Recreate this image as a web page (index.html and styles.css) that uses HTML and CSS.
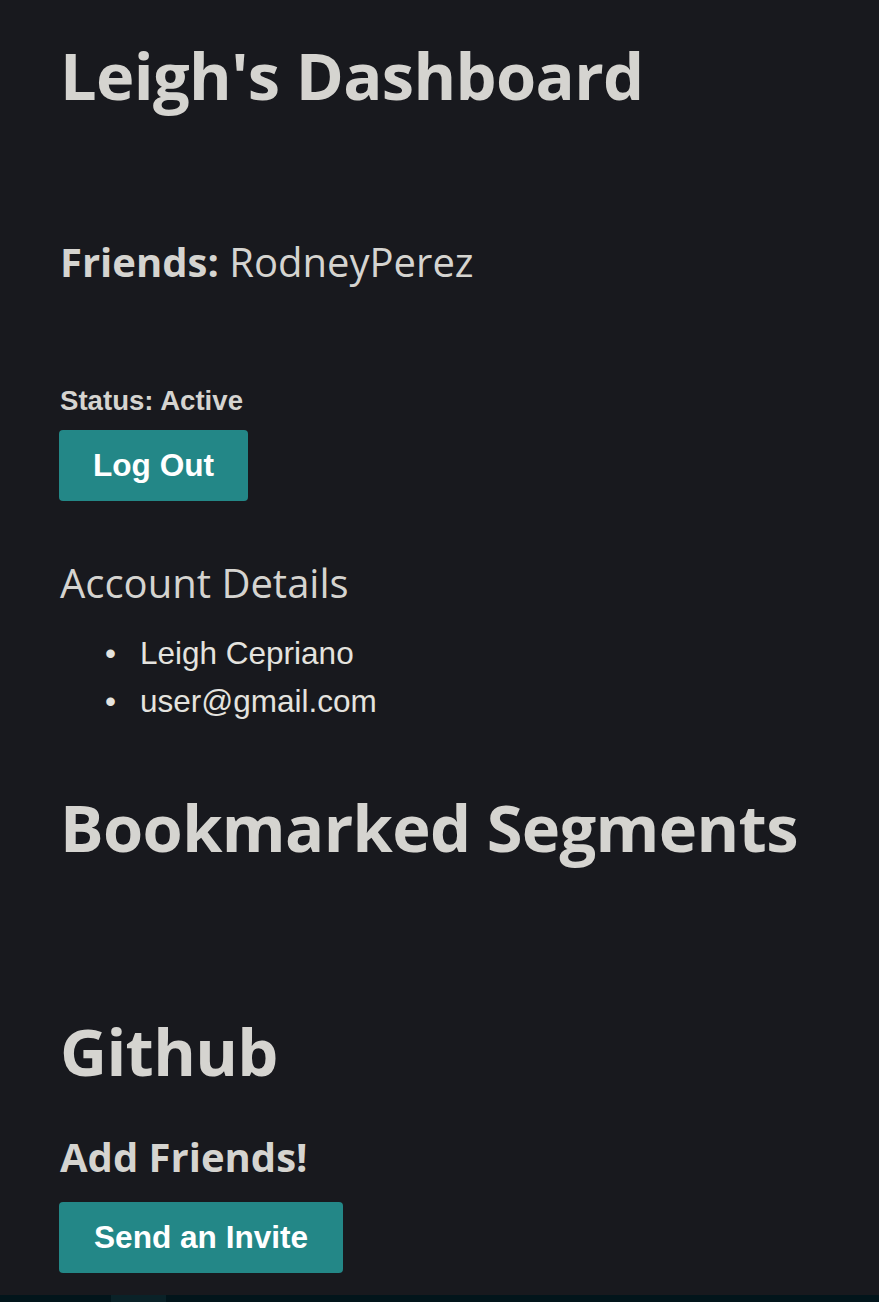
FILE: index.html
```html
<!DOCTYPE html>
<html lang="en">
<head>
<meta charset="utf-8">
<title>Leigh's Dashboard</title>
<link rel="stylesheet" href="styles.css">
</head>
<body>
<main class="page">
  <h1 class="title">Leigh's Dashboard</h1>
  <p class="friends"><strong>Friends:</strong> RodneyPerez</p>
  <p class="status">Status: Active</p>
  <button class="btn btn-logout" type="button">Log Out</button>
  <h3 class="subtitle">Account Details</h3>
  <ul class="details">
    <li>Leigh Cepriano</li>
    <li>user@gmail.com</li>
  </ul>
  <h1 class="title title-bookmarks">Bookmarked Segments</h1>
  <h1 class="title title-github">Github</h1>
  <h2 class="add-friends">Add Friends!</h2>
  <button class="btn btn-invite" type="button">Send an Invite</button>
</main>
<footer class="bottom-bar">
  <div class="bottom-left"></div>
  <div class="bottom-tab"></div>
  <div class="bottom-rest"></div>
</footer>
</body>
</html>
```

FILE: styles.css
```css
html, body {
  margin: 0;
  padding: 0;
}

body {
  background: #18191e;
  color: #d5d4d0;
  font-family: "Open Sans", "Liberation Sans", sans-serif;
  width: 879px;
  height: 1302px;
  overflow: hidden;
  display: flex;
  flex-direction: column;
}

.page {
  flex: 1;
  padding: 36px 0 0 60px;
  display: flex;
  flex-direction: column;
  align-items: flex-start;
}

.title {
  margin: 0;
  font-size: 65px;
  line-height: 78px;
  font-weight: 700;
  letter-spacing: -0.65px;
}

.friends {
  margin: 123.5px 0 0;
  font-size: 40px;
  line-height: 48px;
  font-weight: 400;
}

.friends strong {
  font-weight: 700;
}

.status {
  margin: 98.5px 0 0;
  font-family: "Liberation Sans", Arial, sans-serif;
  font-size: 27.6px;
  line-height: 1.2;
  font-weight: 700;
}

.btn {
  border: none;
  border-radius: 4px;
  background: #238787;
  color: #ffffff;
  font-family: "Liberation Sans", Arial, sans-serif;
  font-weight: 700;
  font-size: 31.6px;
  line-height: 37px;
  padding: 17px 34px;
  margin: 0 0 0 -1px;
  cursor: pointer;
}

.btn-logout {
  margin-top: 13px;
}

.btn-invite {
  margin-top: 21.5px;
  padding: 17px 35px;
}

.subtitle {
  margin: 58px 0 0;
  font-size: 40px;
  line-height: 47.4px;
  font-weight: 400;
}

.details {
  margin: 22.6px 0 0;
  padding: 0 0 0 80px;
  list-style: none;
  font-family: "Liberation Sans", Arial, sans-serif;
  font-size: 31.5px;
  line-height: 48px;
  color: #e4e3df;
}

.details li::before {
  content: "\2022";
  display: inline-block;
  width: 35px;
  margin-left: -35px;
}

.title-bookmarks {
  margin-top: 62.8px;
}

.title-github {
  margin-top: 146px;
}

.add-friends {
  margin: 42.7px 0 0;
  font-size: 40px;
  line-height: 48px;
  font-weight: 700;
}

.bottom-bar {
  height: 7px;
  display: flex;
  background: #02151b;
}

.bottom-left {
  width: 111px;
}

.bottom-tab {
  width: 55px;
  background: #0a2228;
}

.bottom-rest {
  flex: 1;
}
```
